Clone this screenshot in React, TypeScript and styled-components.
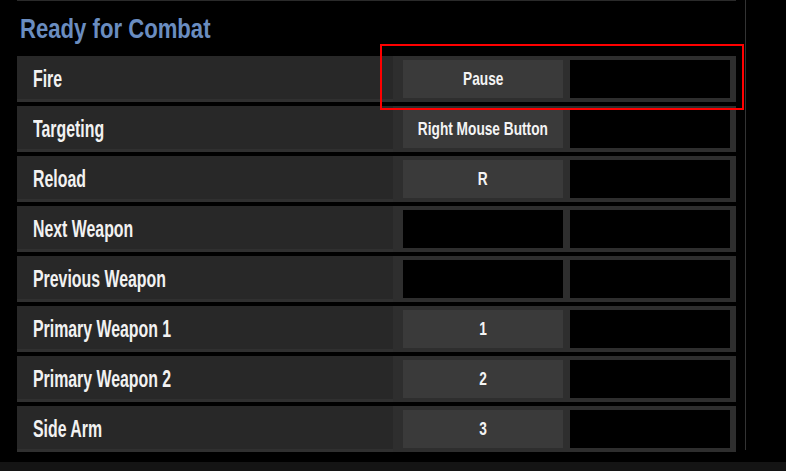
import React from "react";
import styled, { createGlobalStyle } from "styled-components";

const Global = createGlobalStyle`
  html, body { margin: 0; padding: 0; background: #000; }
  body { font-family: "Liberation Sans", Arial, sans-serif; }
`;

const Page = styled.div`
  position: relative;
  width: 786px;
  height: 471px;
  background: #000;
  display: flex;
  flex-direction: column;
  overflow: hidden;
`;

const Main = styled.div`
  display: flex;
  flex: 1;
  padding-left: 17px;
`;

const Panel = styled.div`
  width: 719px;
  border-top: 1px solid #2a2a2a;
  display: flex;
  flex-direction: column;
`;

const Divider = styled.div`
  width: 1px;
  height: 450px;
  margin-left: 9px;
  background: #333;
`;

/* Condensed text: the reference uses a narrow display face */
const Narrow = styled.span<{ $scale: number; $origin?: string }>`
  display: inline-block;
  white-space: nowrap;
  transform: scaleX(${(p) => p.$scale});
  transform-origin: ${(p) => p.$origin ?? "left center"};
`;

const Title = styled.h2`
  margin: 0;
  height: 55px;
  padding: 10px 0 0 3px;
  box-sizing: border-box;
  color: #6a8dc0;
  font-size: 28px;
  font-weight: 700;
  line-height: 36px;
`;

const List = styled.div`
  display: flex;
  flex-direction: column;
  gap: 4px;
`;

const Row = styled.div`
  display: flex;
  height: 46px;
  background: #282828;
  box-shadow: inset 0 -3px 0 #303030;
`;

const Label = styled.div`
  flex: 1;
  padding-left: 16px;
  color: #f2f2f2;
  font-size: 23px;
  font-weight: 700;
  line-height: 46px;
`;

const Keys = styled.div`
  display: flex;
  gap: 7px;
  width: 343px;
  box-sizing: border-box;
  padding: 4px 6px 4px 10px;
  background: #2e2e2e;
`;

const KeyCell = styled.div<{ $empty?: boolean }>`
  width: 160px;
  height: 38px;
  background: ${(p) => (p.$empty ? "#000" : "#3a3a3a")};
  color: #f4f4f4;
  font-size: 18.5px;
  font-weight: 700;
  display: flex;
  align-items: center;
  justify-content: center;
`;

const Footer = styled.div`
  height: 9px;
  background: #141414;
`;

const Highlight = styled.div`
  position: absolute;
  left: 380px;
  top: 44px;
  width: 364px;
  height: 66px;
  box-sizing: border-box;
  border: 2px solid #f00;
  pointer-events: none;
`;

const rows: { label: string; key: string }[] = [
  { label: "Fire", key: "Pause" },
  { label: "Targeting", key: "Right Mouse Button" },
  { label: "Reload", key: "R" },
  { label: "Next Weapon", key: "" },
  { label: "Previous Weapon", key: "" },
  { label: "Primary Weapon 1", key: "1" },
  { label: "Primary Weapon 2", key: "2" },
  { label: "Side Arm", key: "3" },
];

export default function App() {
  return (
    <Page>
      <Global />
      <Main>
        <Panel>
          <Title>
            <Narrow $scale={0.79}>Ready for Combat</Narrow>
          </Title>
          <List>
            {rows.map((r) => (
              <Row key={r.label}>
                <Label>
                  <Narrow $scale={0.69}>{r.label}</Narrow>
                </Label>
                <Keys>
                  <KeyCell $empty={!r.key}>
                    {r.key && (
                      <Narrow $scale={0.74} $origin="center">
                        {r.key}
                      </Narrow>
                    )}
                  </KeyCell>
                  <KeyCell $empty />
                </Keys>
              </Row>
            ))}
          </List>
        </Panel>
        <Divider />
      </Main>
      <Footer />
      <Highlight />
    </Page>
  );
}
